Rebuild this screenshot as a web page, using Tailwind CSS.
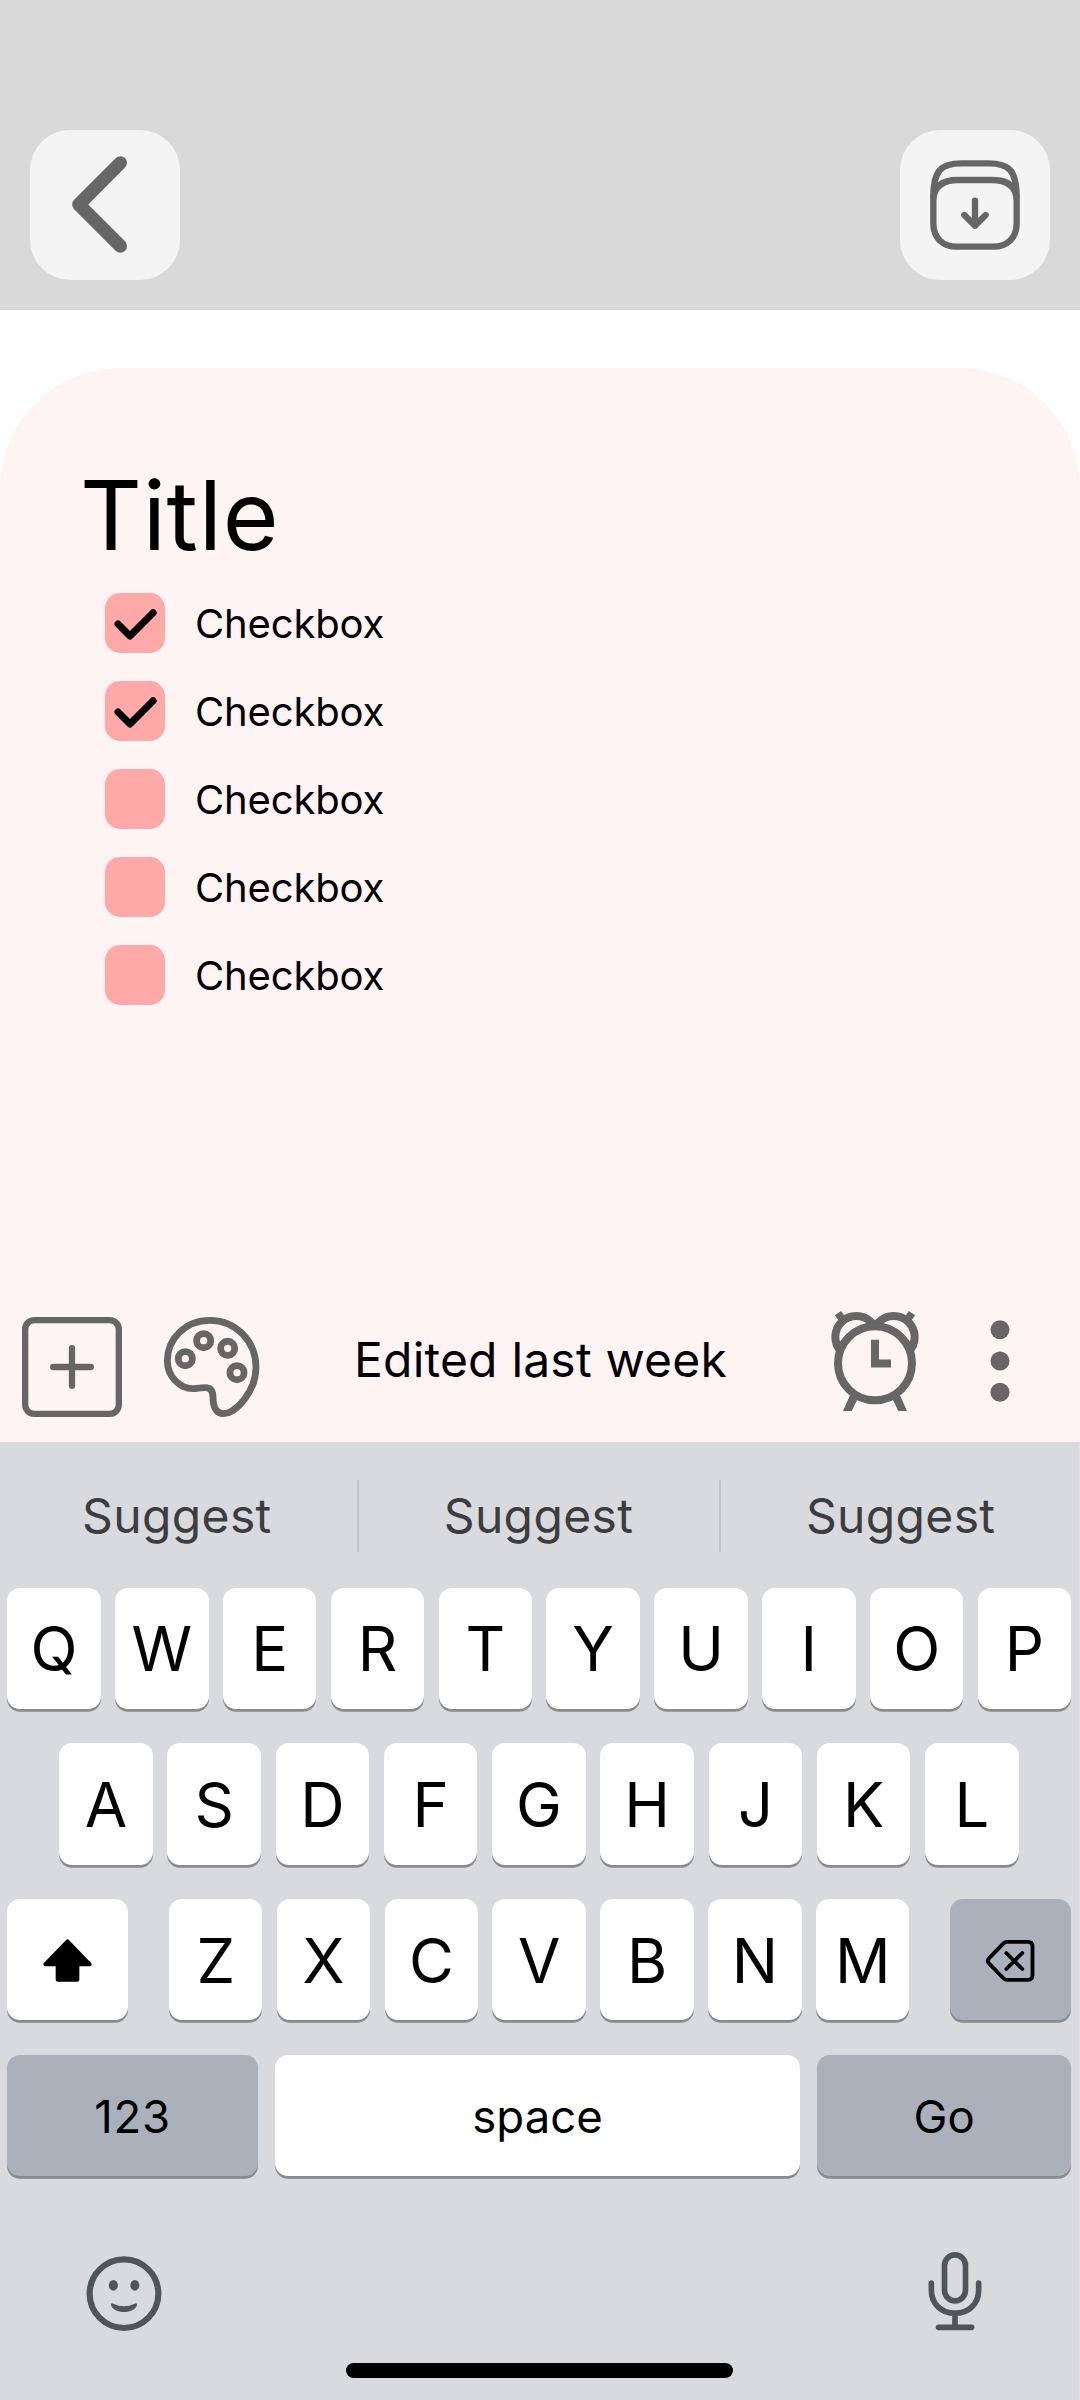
<!DOCTYPE html>
<html lang="en">
<head>
<meta charset="utf-8">
<title>Note editor</title>
<script src="https://cdn.jsdelivr.net/npm/@tailwindcss/browser@4"></script>
</head>
<body class="w-[1080px] h-[2400px] overflow-hidden bg-white text-black font-['Inter',sans-serif] flex flex-col">

<header class="h-[310px] shrink-0 bg-[#d9d9d9] flex items-end justify-between px-[30px] pb-[30px]">
  <button class="size-[150px] rounded-[40px] bg-[#f4f4f4]" aria-label="Back">
    <svg class="size-[150px]" viewBox="0 0 450 450" fill="none" stroke="#666" stroke-width="40" stroke-linecap="round" stroke-linejoin="round"><path d="M271 98.500L146.500 223.500L271 348"/></svg>
  </button>
  <button class="size-[150px] rounded-[40px] bg-[#f4f4f4]" aria-label="Archive">
    <svg class="size-[150px]" viewBox="300 60 450 450" fill="none" stroke="#666" stroke-width="19" stroke-linecap="round" stroke-linejoin="round">
      <path d="M400 272C400 229 427 210 475 210H575C623 210 650 229 650 272V340C650 384 622 410 580 410H470C428 410 400 384 400 340Z"/>
      <path d="M400 262C400 182 422 160 485 160H565C628 160 650 182 650 262"/>
      <path d="M525 272V347M493 315L525 347L557 315"/>
    </svg>
  </button>
</header>

<main class="mt-[58px] h-[1074px] shrink-0 rounded-t-[120px] bg-[#fef4f3] flex flex-col">
  <h1 class="mt-[89px] ml-[80px] text-[96px] leading-[116px] tracking-[0.700px]">Title</h1>
  <ul class="mt-[20px] ml-[105px] flex flex-col gap-7 text-[40px] leading-[58px] tracking-[-0.150px]">
    <li class="flex items-center gap-[30px]"><span class="size-[60px] rounded-[15px] bg-[#ffa9a9]"><svg class="size-[60px]" viewBox="0 0 180 180" fill="none" stroke="#000" stroke-width="21" stroke-linecap="round" stroke-linejoin="round"><path d="M39 93L75 129L144.500 59"/></svg></span><span class="pt-0.5">Checkbox</span></li>
    <li class="flex items-center gap-[30px]"><span class="size-[60px] rounded-[15px] bg-[#ffa9a9]"><svg class="size-[60px]" viewBox="0 0 180 180" fill="none" stroke="#000" stroke-width="21" stroke-linecap="round" stroke-linejoin="round"><path d="M39 93L75 129L144.500 59"/></svg></span><span class="pt-0.5">Checkbox</span></li>
    <li class="flex items-center gap-[30px]"><span class="size-[60px] rounded-[15px] bg-[#ffa9a9]"></span><span class="pt-0.5">Checkbox</span></li>
    <li class="flex items-center gap-[30px]"><span class="size-[60px] rounded-[15px] bg-[#ffa9a9]"></span><span class="pt-0.5">Checkbox</span></li>
    <li class="flex items-center gap-[30px]"><span class="size-[60px] rounded-[15px] bg-[#ffa9a9]"></span><span class="pt-0.5">Checkbox</span></li>
  </ul>
  <div class="mt-auto h-[142px] pl-5 flex">
    <svg class="w-[260px] h-[142px]" viewBox="60 30 780 426" fill="none" stroke="#666" stroke-linecap="round">
      <rect x="75.500" y="90.500" width="281" height="281" rx="27" stroke-width="19"/>
      <path stroke-width="19" d="M159.500 231H272.500M216 174.500V287.500"/>
      <path stroke-width="20.500" d="M630 91C556 91 502 147 502 212C502 262 542 296 578 296C592 296 600 293 614 293C634 293 639 305 639 322C639 350 648 371 671 371C706 371 768 305 768 232C768 155 708 91 630 91Z"/>
      <g stroke-width="20.500"><circle cx="556" cy="206" r="21.200"/><circle cx="611" cy="152" r="21.200"/><circle cx="683" cy="175" r="21.200"/><circle cx="711" cy="248" r="21.200"/></g>
    </svg>
    <p class="ml-[74px] w-[440px] mt-[31px] text-[48px] leading-[58px] tracking-[0.200px] whitespace-nowrap">Edited last week</p>
    <svg class="w-[240px] h-[142px] ml-[16px]" viewBox="270 30 720 426" fill="none" stroke="#666">
      <g stroke-width="24">
        <circle cx="409" cy="141" r="63"/><circle cx="521" cy="141" r="63"/>
        <circle cx="465" cy="220" r="111" fill="#fef4f3"/>
        <path d="M465 149V220.500H513"/>
      </g>
      <path stroke-width="23" d="M354 69.500L367 88M576 69.500L563 88"/>
      <path stroke="none" fill="#666" d="M390 316L413 326L395 363H369ZM540 316L517 326L535 363H561Z"/>
      <g stroke="none" fill="#666"><circle cx="840" cy="119" r="28.500"/><circle cx="840" cy="213" r="28.500"/><circle cx="840" cy="307" r="28.500"/></g>
    </svg>
  </div>
</main>

<section id="keyboard" class="h-[958px] shrink-0 bg-[#d9dade] border-r border-[#e1e0e4] flex flex-col">
  <div class="mt-[38px] h-[72px] flex items-center text-[48px] tracking-[0.350px] text-[#3c3d3f] text-center">
    <div class="w-[357px] pr-[3px]">Suggest</div>
    <div class="w-[2.700px] h-full bg-[#c3c4c8]"></div>
    <div class="w-[359.500px] pr-px">Suggest</div>
    <div class="w-[2.700px] h-full bg-[#c3c4c8]"></div>
    <div class="w-[358px] pl-px">Suggest</div>
  </div>
  <div id="keys" class="mt-[35.700px] flex flex-col gap-[34.400px] text-[61.500px]">
    <div class="flex h-[121.300px] pl-[7.300px] gap-[14.330px]" data-row="QWERTYUIOP"></div>
    <div class="flex h-[121.300px] pl-[59.200px] gap-[14.750px]" data-row="ASDFGHJKL"></div>
    <div class="flex h-[121.300px] pl-[7.300px]">
      <div class="w-[121px] rounded-[13px] bg-white shadow-[0_2.700px_0_#898a8d]"><svg class="w-[121px] h-[121px]" viewBox="22 537 363 363"><path stroke="#000" stroke-width="12" stroke-linejoin="round" d="M203.500 664L270 733H233V779H174V733H137Z"/></svg></div>
      <div class="flex ml-[40.700px] mr-[40.400px] gap-[14.330px]" data-row="ZXCVBNM"></div>
      <div class="w-[121px] rounded-[13px] bg-[#abb1bb] shadow-[0_2.700px_0_#898a8d]"><svg class="w-[121px] h-[121px]" viewBox="750 537 363 363" fill="none" stroke="#000" stroke-width="11.500" stroke-linecap="round" stroke-linejoin="round"><path d="M921 665.500H984Q997.500 665.500 997.500 679V766Q997.500 779.500 984 779.500H921Q915 779.500 911 775.500L867 730Q860 722.500 867 715L911 669.500Q915 665.500 921 665.500ZM919 699L967 747M967 699L919 747"/></svg></div>
    </div>
    <div class="flex h-[121.300px] pl-[7.300px] text-[45.500px]">
      <div class="w-[250.700px] rounded-[13px] bg-[#abb1bb] shadow-[0_2.700px_0_#898a8d] flex items-center justify-center pt-[3px] tracking-[0.800px]">123</div>
      <div class="w-[524.500px] ml-[17.300px] mr-[17.500px] rounded-[13px] bg-white shadow-[0_2.700px_0_#898a8d] flex items-center justify-center pt-[3px]">space</div>
      <div class="w-[253.700px] rounded-[13px] bg-[#abb1bb] shadow-[0_2.700px_0_#898a8d] flex items-center justify-center pt-[3px]">Go</div>
    </div>
  </div>
  <div class="mt-[64px] h-[123px] flex justify-between pl-[74px] pr-[74px]">
    <svg class="w-[100px] h-[100px]" viewBox="222 630 300 300" fill="#50555c"><circle cx="372" cy="791" r="103" fill="none" stroke="#50555c" stroke-width="18.500"/><ellipse cx="340" cy="766" rx="13.500" ry="16"/><ellipse cx="404.500" cy="766" rx="13.500" ry="16"/><path d="M333 825Q332 818 340 821Q372 836 404 821Q412 818 411 825C403 853 341 853 333 825Z"/></svg>
    <svg class="w-[100px] h-[100px]" viewBox="613 630 300 300" fill="none" stroke="#50555c" stroke-width="17" stroke-linecap="round"><rect x="731.500" y="674.500" width="63" height="138" rx="31.500"/><path d="M692 759V780C692 822 722 849.500 763 849.500S834 822 834 780V759M763 850V892M713.500 892H813"/></svg>
  </div>
  <div class="w-[387px] h-[15px] rounded-full bg-black ml-[345.500px]"></div>
</section>

<script>
for (const row of document.querySelectorAll('[data-row]')) {
  for (const letter of row.dataset.row) {
    const key = document.createElement('div');
    key.className = 'w-[93.500px] rounded-[13px] bg-white shadow-[0_2.700px_0_#898a8d] flex items-center justify-center pt-0.5';
    key.textContent = letter;
    row.append(key);
  }
}
</script>
</body>
</html>
